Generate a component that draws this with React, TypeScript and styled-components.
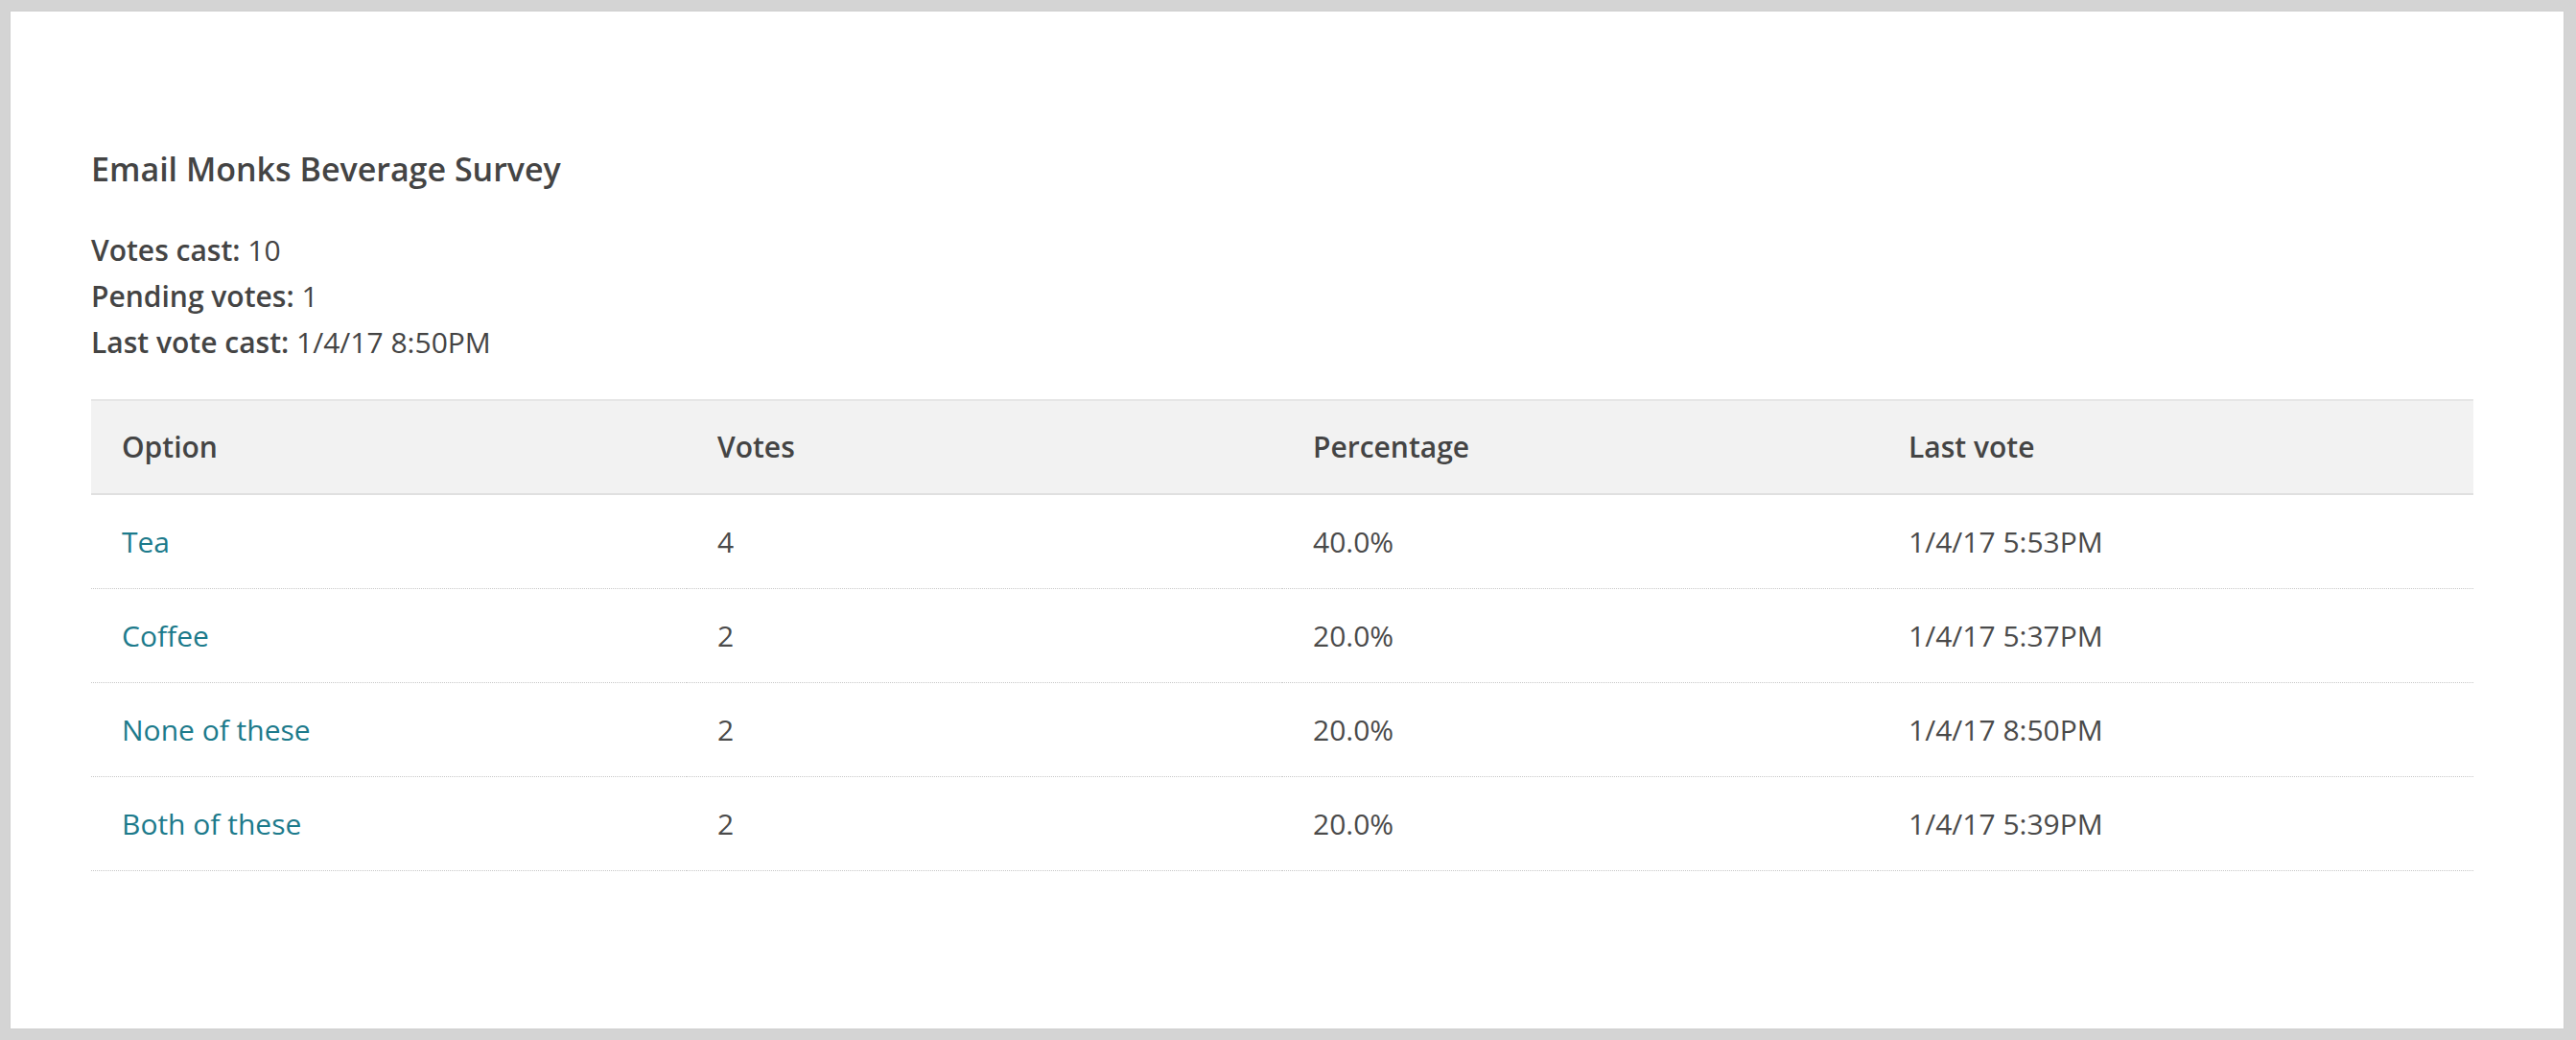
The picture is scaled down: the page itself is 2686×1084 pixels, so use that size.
import React from "react";
import styled, { createGlobalStyle } from "styled-components";

const Global = createGlobalStyle`
  html, body {
    margin: 0;
    padding: 0;
    background: #d4d4d4;
  }
  body {
    font-family: "Open Sans", "Noto Sans", "Liberation Sans", sans-serif;
    color: #444;
  }
  * { box-sizing: border-box; }
`;

const Page = styled.div`
  padding: 12px 13px 12px 11px;
  min-height: 1084px;
`;

const Card = styled.main`
  background: #ffffff;
  height: 1060px;
  box-shadow: 0 0 1px rgba(0, 0, 0, 0.15);
  padding: 144px 94px 0 84px;
`;

const Title = styled.h1`
  margin: 0;
  font-size: 34px;
  line-height: 40px;
  font-weight: 600;
  color: #444;
`;

const Stats = styled.dl`
  margin: 41px 0 35px;
  padding: 0;
`;

const StatRow = styled.div`
  font-size: 30px;
  line-height: 48px;
  color: #444;
`;

const StatLabel = styled.dt`
  display: inline;
  font-weight: 600;
`;

const StatValue = styled.dd`
  display: inline;
  margin: 0;
  font-weight: 400;
`;

const Table = styled.table`
  width: 2484px;
  border-collapse: collapse;
  table-layout: fixed;
  font-size: 30px;
  line-height: 48px;
`;

const HeadRow = styled.tr`
  background: #f2f2f2;
  border-top: 2px solid #e6e6e6;
  border-bottom: 2px solid #e0e0e0;
`;

const HeadCell = styled.th`
  text-align: left;
  font-weight: 600;
  color: #444;
  padding: 24px 32px;
`;

const BodyRow = styled.tr`
  border-bottom: 1px dotted #c8c8c8;
`;

const Cell = styled.td`
  padding: 25px 32px 24px;
  color: #4a4a4a;
  font-weight: 400;
`;

const OptionLink = styled.a`
  color: #1c7a8b;
  text-decoration: none;
  cursor: pointer;
`;

const rows = [
  { option: "Tea", votes: 4, pct: "40.0%", last: "1/4/17 5:53PM" },
  { option: "Coffee", votes: 2, pct: "20.0%", last: "1/4/17 5:37PM" },
  { option: "None of these", votes: 2, pct: "20.0%", last: "1/4/17 8:50PM" },
  { option: "Both of these", votes: 2, pct: "20.0%", last: "1/4/17 5:39PM" },
];

export default function App() {
  return (
    <>
      <Global />
      <Page>
        <Card>
          <Title>Email Monks Beverage Survey</Title>
          <Stats>
            <StatRow>
              <StatLabel>Votes cast:</StatLabel> <StatValue>10</StatValue>
            </StatRow>
            <StatRow>
              <StatLabel>Pending votes:</StatLabel> <StatValue>1</StatValue>
            </StatRow>
            <StatRow>
              <StatLabel>Last vote cast:</StatLabel>{" "}
              <StatValue>1/4/17 8:50PM</StatValue>
            </StatRow>
          </Stats>
          <Table>
            <thead>
              <HeadRow>
                <HeadCell>Option</HeadCell>
                <HeadCell>Votes</HeadCell>
                <HeadCell>Percentage</HeadCell>
                <HeadCell>Last vote</HeadCell>
              </HeadRow>
            </thead>
            <tbody>
              {rows.map((r) => (
                <BodyRow key={r.option}>
                  <Cell>
                    <OptionLink>{r.option}</OptionLink>
                  </Cell>
                  <Cell>{r.votes}</Cell>
                  <Cell>{r.pct}</Cell>
                  <Cell>{r.last}</Cell>
                </BodyRow>
              ))}
            </tbody>
          </Table>
        </Card>
      </Page>
    </>
  );
}
